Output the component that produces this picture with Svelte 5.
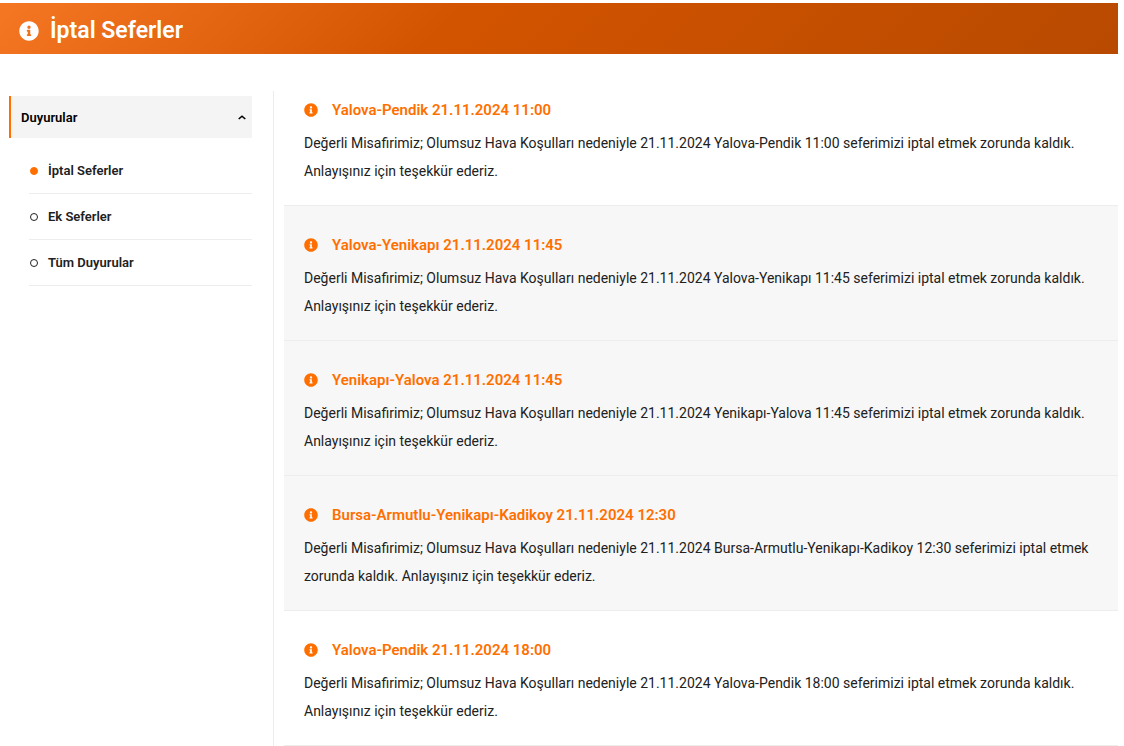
<script lang="ts">
  type Notice = { route: string; time: string; muted: boolean };

  const date = '21.11.2024';

  const menu = ['İptal Seferler', 'Ek Seferler', 'Tüm Duyurular'];

  const notices: Notice[] = [
    { route: 'Yalova-Pendik', time: '11:00', muted: false },
    { route: 'Yalova-Yenikapı', time: '11:45', muted: true },
    { route: 'Yenikapı-Yalova', time: '11:45', muted: true },
    { route: 'Bursa-Armutlu-Yenikapı-Kadikoy', time: '12:30', muted: true },
    { route: 'Yalova-Pendik', time: '18:00', muted: false },
  ];

  let open = $state(true);
  let active = $state('İptal Seferler');

  function select(event: MouseEvent, item: string) {
    event.preventDefault();
    active = item;
  }
</script>

{#snippet infoIcon()}
  <svg class="info-icon" viewBox="0 0 512 512" aria-hidden="true">
    <path
      fill="currentColor"
      d="M256 8C119 8 8 119 8 256s111 248 248 248 248-111 248-248S393 8 256 8zm0 110c23.200 0 42 18.800 42 42s-18.800 42-42 42-42-18.800-42-42 18.800-42 42-42zm56 254c0 6.600-5.400 12-12 12h-88c-6.600 0-12-5.400-12-12v-24c0-6.600 5.400-12 12-12h12v-64h-12c-6.600 0-12-5.400-12-12v-24c0-6.600 5.400-12 12-12h64c6.600 0 12 5.400 12 12v100h12c6.600 0 12 5.400 12 12v24z"
    />
  </svg>
{/snippet}

<div class="page">
  <header class="page-header">
    {@render infoIcon()}
    <h1>İptal Seferler</h1>
  </header>

  <div class="layout">
    <nav class="sidebar" aria-label="Duyurular">
      <button class="menu-toggle" type="button" aria-expanded={open} onclick={() => (open = !open)}>
        <span>Duyurular</span>
        <svg class="chevron" class:closed={!open} viewBox="0 0 8 8" aria-hidden="true">
          <path d="M0.700 6L4 3.200 7.300 6" fill="none" stroke="currentColor" stroke-width="1.600" />
        </svg>
      </button>
      {#if open}
        <ul class="menu">
          {#each menu as item}
            <li>
              <a href="#duyurular" class:active={item === active} onclick={(e) => select(e, item)}>
                <span class="bullet"></span>
                {item}
              </a>
            </li>
          {/each}
        </ul>
      {/if}
    </nav>

    <main class="content">
      {#each notices as notice}
        <article class="notice" class:muted={notice.muted}>
          <h2>
            {@render infoIcon()}
            {notice.route} {date} {notice.time}
          </h2>
          <p>
            Değerli Misafirimiz; Olumsuz Hava Koşulları nedeniyle {date} {notice.route} {notice.time} seferimizi
            iptal etmek zorunda kaldık. Anlayışınız için teşekkür ederiz.
          </p>
        </article>
      {/each}
    </main>
  </div>
</div>

<style>
  :global(body) {
    margin: 0;
    background: #fff;
  }

  .page {
    padding: 3px 6px 0 0;
    font-family: Roboto, 'Noto Sans', sans-serif;
    color: #212121;
  }

  .page-header {
    display: flex;
    align-items: center;
    gap: 11px;
    padding: 10px 19px 6px;
    background: linear-gradient(135deg, #f67723 0%, #d35400 40%, #b84a00 100%);
    color: #fff;
  }

  .page-header h1 {
    margin: 0;
    font-size: 23px;
    font-weight: 600;
    line-height: 35px;
  }

  .info-icon {
    flex: none;
    width: 14px;
    height: 14px;
  }

  .page-header .info-icon {
    width: 20px;
    height: 20px;
  }

  .layout {
    display: grid;
    grid-template-columns: 243px 1fr;
    gap: 21px;
    padding: 37px 0 0 9px;
  }

  .sidebar {
    padding-top: 5px;
  }

  .menu-toggle {
    display: flex;
    align-items: center;
    justify-content: space-between;
    width: 100%;
    height: 42px;
    padding: 0 6px 0 10px;
    border: 0;
    border-left: 2px solid #ff6f00;
    background: #f4f4f4;
    color: #000;
    font-family: inherit;
    font-size: 13px;
    font-weight: 600;
    cursor: pointer;
  }

  .chevron {
    width: 8px;
    height: 8px;
  }

  .chevron.closed {
    transform: rotate(180deg);
  }

  .menu {
    margin: 10px 0 0 20px;
    padding: 0;
    list-style: none;
  }

  .menu li {
    border-bottom: 1px solid #ededed;
  }

  .menu a {
    display: flex;
    align-items: center;
    gap: 10px;
    padding: 1px 1px 0;
    color: #212121;
    font-size: 13px;
    font-weight: 600;
    line-height: 44px;
    text-decoration: none;
  }

  .bullet {
    box-sizing: border-box;
    width: 8px;
    height: 8px;
    border: 1px solid #212121;
    border-radius: 50%;
  }

  .active .bullet {
    border-color: #ff6f00;
    background: #ff6f00;
  }

  .content {
    border-left: 1px solid #ededed;
    padding-left: 10px;
  }

  .notice {
    padding: 25px 20px 20px;
    border-bottom: 1px solid #ededed;
  }

  .notice:first-child {
    padding-top: 5px;
  }

  .notice.muted {
    background: #f7f7f7;
  }

  .notice h2 {
    display: flex;
    align-items: center;
    gap: 14px;
    margin: 0 0 5px;
    color: #ff6f00;
    font-size: 15px;
    font-weight: 600;
    line-height: 28px;
  }

  .notice p {
    margin: 0;
    font-size: 14px;
    line-height: 28px;
  }
</style>
